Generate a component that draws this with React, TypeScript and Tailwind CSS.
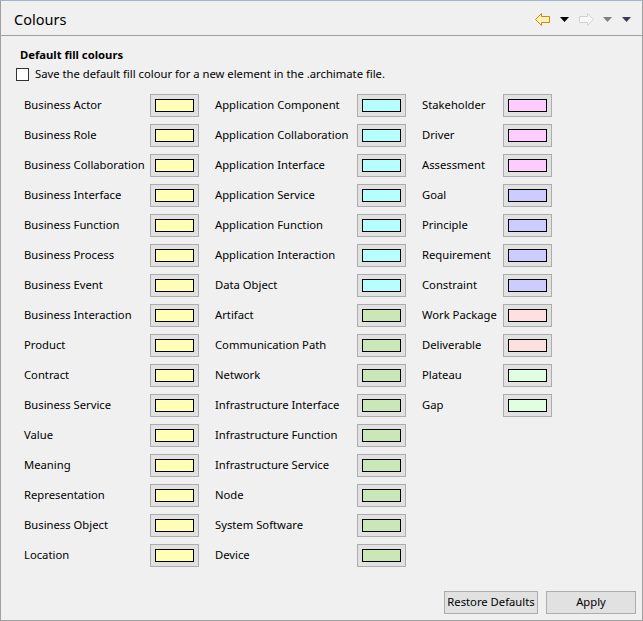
import React from "react";

type Item = { name: string; fill: string };

const BIZ = "#ffffb5";
const APP = "#b5ffff";
const TECH = "#c9e7b7";
const MOT = "#ffccff";
const GOAL = "#ccccff";
const IMPL = "#ffe0e0";
const PLAT = "#e0ffe0";

const col1: Item[] = [
  "Business Actor",
  "Business Role",
  "Business Collaboration",
  "Business Interface",
  "Business Function",
  "Business Process",
  "Business Event",
  "Business Interaction",
  "Product",
  "Contract",
  "Business Service",
  "Value",
  "Meaning",
  "Representation",
  "Business Object",
  "Location",
].map((name) => ({ name, fill: BIZ }));

const col2: Item[] = [
  { name: "Application Component", fill: APP },
  { name: "Application Collaboration", fill: APP },
  { name: "Application Interface", fill: APP },
  { name: "Application Service", fill: APP },
  { name: "Application Function", fill: APP },
  { name: "Application Interaction", fill: APP },
  { name: "Data Object", fill: APP },
  { name: "Artifact", fill: TECH },
  { name: "Communication Path", fill: TECH },
  { name: "Network", fill: TECH },
  { name: "Infrastructure Interface", fill: TECH },
  { name: "Infrastructure Function", fill: TECH },
  { name: "Infrastructure Service", fill: TECH },
  { name: "Node", fill: TECH },
  { name: "System Software", fill: TECH },
  { name: "Device", fill: TECH },
];

const col3: Item[] = [
  { name: "Stakeholder", fill: MOT },
  { name: "Driver", fill: MOT },
  { name: "Assessment", fill: MOT },
  { name: "Goal", fill: GOAL },
  { name: "Principle", fill: GOAL },
  { name: "Requirement", fill: GOAL },
  { name: "Constraint", fill: GOAL },
  { name: "Work Package", fill: IMPL },
  { name: "Deliverable", fill: IMPL },
  { name: "Plateau", fill: PLAT },
  { name: "Gap", fill: PLAT },
];

function Swatch({ fill }: { fill: string }) {
  return (
    <button className="w-[49px] h-[23px] border border-[#adadad] bg-[#e1e1e1] flex items-center justify-center">
      <span
        className="block w-[39px] h-[13px] border-[1.5px] border-black"
        style={{ backgroundColor: fill }}
      />
    </button>
  );
}

function Column({ items, labelWidth }: { items: Item[]; labelWidth: string }) {
  return (
    <div className="flex flex-col">
      {items.map((item) => (
        <div key={item.name} className="h-[30px] flex items-center">
          <span className={`${labelWidth} whitespace-nowrap`}>{item.name}</span>
          <Swatch fill={item.fill} />
        </div>
      ))}
    </div>
  );
}

function Triangle({ color }: { color: string }) {
  return (
    <svg width="9" height="5" viewBox="0 0 9 5">
      <path d="M0 0 H9 L4.5 5 Z" fill={color} />
    </svg>
  );
}

function Arrow({ stroke, fill, flip }: { stroke: string; fill: string; flip?: boolean }) {
  return (
    <svg width="15" height="13" viewBox="0 0 15 13" style={flip ? { transform: "scaleX(-1)" } : undefined}>
      <path
        d="M0.5 6.5 L6.5 0.5 V3.5 H14.5 V9.5 H6.5 V12.5 Z"
        fill={fill}
        stroke={stroke}
        strokeWidth="1"
        strokeLinejoin="round"
      />
    </svg>
  );
}

export default function App() {
  return (
    <div
      className="w-[643px] h-[621px] bg-[#f0f0f0] border border-[#a0a0a0] border-t-[#9fb6cd] flex flex-col text-[11.25px] text-black"
      style={{ fontFamily: '"Noto Sans", "Open Sans", sans-serif' }}
    >
      <div className="h-[35px] border-b border-[#a0a0a0] flex items-center pl-[13px] pr-[11px] pt-[3px]">
        <span className="text-[14.5px]">Colours</span>
        <div className="ml-auto flex items-center">
          <Arrow stroke="#c98a10" fill="#fff2b8" />
          <span className="ml-[10px]">
            <Triangle color="#000000" />
          </span>
          <span className="ml-[10px]">
            <Arrow stroke="#d2d2d2" fill="#f8f8f8" flip />
          </span>
          <span className="ml-[9px]">
            <Triangle color="#808080" />
          </span>
          <span className="ml-[10px]">
            <Triangle color="#3a3a5a" />
          </span>
        </div>
      </div>

      <div className="flex-1 flex flex-col pl-[15px] pt-[11px]">
        <div className="font-bold pl-[4px] leading-[16px]">Default fill colours</div>
        <label className="flex items-center mt-[4px] h-[15px]">
          <span className="w-[13px] h-[13px] border border-[#333] bg-white" />
          <span className="ml-[6px]">Save the default fill colour for a new element in the .archimate file.</span>
        </label>

        <div className="flex pl-[8px] mt-[8px]">
          <Column items={col1} labelWidth="w-[126px]" />
          <div className="w-[16px]" />
          <Column items={col2} labelWidth="w-[142px]" />
          <div className="w-[16px]" />
          <Column items={col3} labelWidth="w-[81px]" />
        </div>

        <div className="mt-auto mb-[6px] flex justify-end gap-[8px] pr-[6px]">
          <button className="w-[94px] h-[23px] border border-[#adadad] bg-[#e1e1e1] whitespace-nowrap">
            Restore Defaults
          </button>
          <button className="w-[90px] h-[23px] border border-[#adadad] bg-[#e1e1e1]">Apply</button>
        </div>
      </div>
    </div>
  );
}
